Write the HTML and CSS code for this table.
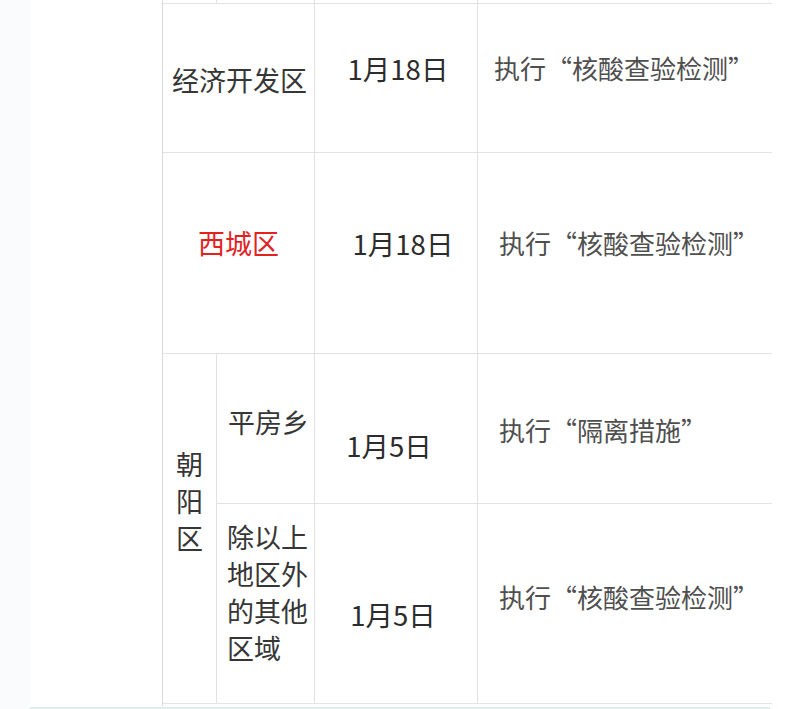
FILE: index.html
```html
<!DOCTYPE html>
<html lang="zh-CN">
<head>
<meta charset="utf-8">
<title>表格</title>
<link rel="stylesheet" href="styles.css">
</head>
<body>
<div class="page">
  <div class="gutter"></div>
  <div class="main">
    <div class="sheet">
      <div class="table">
        <div class="cell"></div>
        <div class="cell"></div>
        <div class="cell"></div>
        <div class="cell"></div>

        <div class="cell span2 area r1-area">经济开发区</div>
        <div class="cell date r1-date">1月18日</div>
        <div class="cell note r1-note">执行“核酸查验检测”</div>

        <div class="cell span2 area red r2">西城区</div>
        <div class="cell date r2 r2-date">1月18日</div>
        <div class="cell note r2 r2-note">执行“核酸查验检测”</div>

        <div class="cell vert"><div class="vtext">朝阳区</div></div>
        <div class="cell area r3-area">平房乡</div>
        <div class="cell date r3-date">1月5日</div>
        <div class="cell note r3-note">执行“隔离措施”</div>

        <div class="cell area r4-area"><div class="wrap3">除以上地区外的其他区域</div></div>
        <div class="cell date r4-date">1月5日</div>
        <div class="cell note r4-note">执行“核酸查验检测”</div>
      </div>
    </div>
    <div class="footline"></div>
  </div>
</div>
</body>
</html>
```

FILE: styles.css
```css
html, body {
  margin: 0;
  padding: 0;
  background: #ffffff;
}

body {
  width: 792px;
  height: 709px;
  overflow: hidden;
  font-family: "Noto Sans CJK SC", "Noto Sans", sans-serif;
  font-size: 26px;
  color: #333333;
}

.page {
  display: flex;
  height: 709px;
}

.gutter {
  width: 30px;
  flex: none;
  background: #fafbfd;
}

.main {
  flex: 1;
  display: flex;
  flex-direction: column;
}

.sheet {
  margin-left: 132px;
  border-left: 1px solid #d9d9d9;
  width: 609px;
  flex: 1;
  display: flex;
  flex-direction: column;
}

.table {
  display: grid;
  grid-template-columns: 53px 97px 162px 294px;
  grid-template-rows: 3px 148px 200px 149px 199px;
  gap: 1px;
  background: #e2e2e2;
  border-bottom: 1px solid #e4e4e4;
  width: 609px;
}

.cell {
  background: #ffffff;
  display: flex;
  align-items: center;
  justify-content: center;
  box-sizing: border-box;
  line-height: 1.2;
  white-space: nowrap;
}

.span2 {
  grid-column: span 2;
}

.area {
  color: #363636;
  font-size: 27px;
}

.red {
  color: #e3211f;
}

.date {
  color: #2c2c2c;
  font-size: 27.5px;
}

.note {
  justify-content: flex-start;
  color: #4f4f4f;
  padding-left: 21px;
}

.r1-area { padding-top: 4px; padding-left: 2px; }
.r1-date { padding-bottom: 20px; padding-left: 4px; }
.r1-note { padding-bottom: 20px; padding-left: 16px; }

.r2 { padding-bottom: 20px; }
.r2-date { padding-left: 14px; }

.vert {
  grid-row: span 2;
  padding-bottom: 56px;
  color: #363636;
  font-size: 27px;
}

.vtext {
  width: 1em;
  white-space: normal;
  line-height: 37px;
}

.r3-area { padding-bottom: 13px; padding-left: 6px; }
.r3-date { padding-top: 33px; padding-right: 14px; }
.r3-note { padding-top: 3px; }

.r4-area { padding-bottom: 23px; padding-left: 4px; }
.wrap3 {
  width: 3em;
  white-space: normal;
  line-height: 37px;
}
.r4-date { padding-top: 21px; padding-right: 6px; }
.r4-note { padding-bottom: 13px; }

.footline {
  height: 2px;
  margin-top: 1px;
  width: 740px;
  background: #e3ecec;
}
```
